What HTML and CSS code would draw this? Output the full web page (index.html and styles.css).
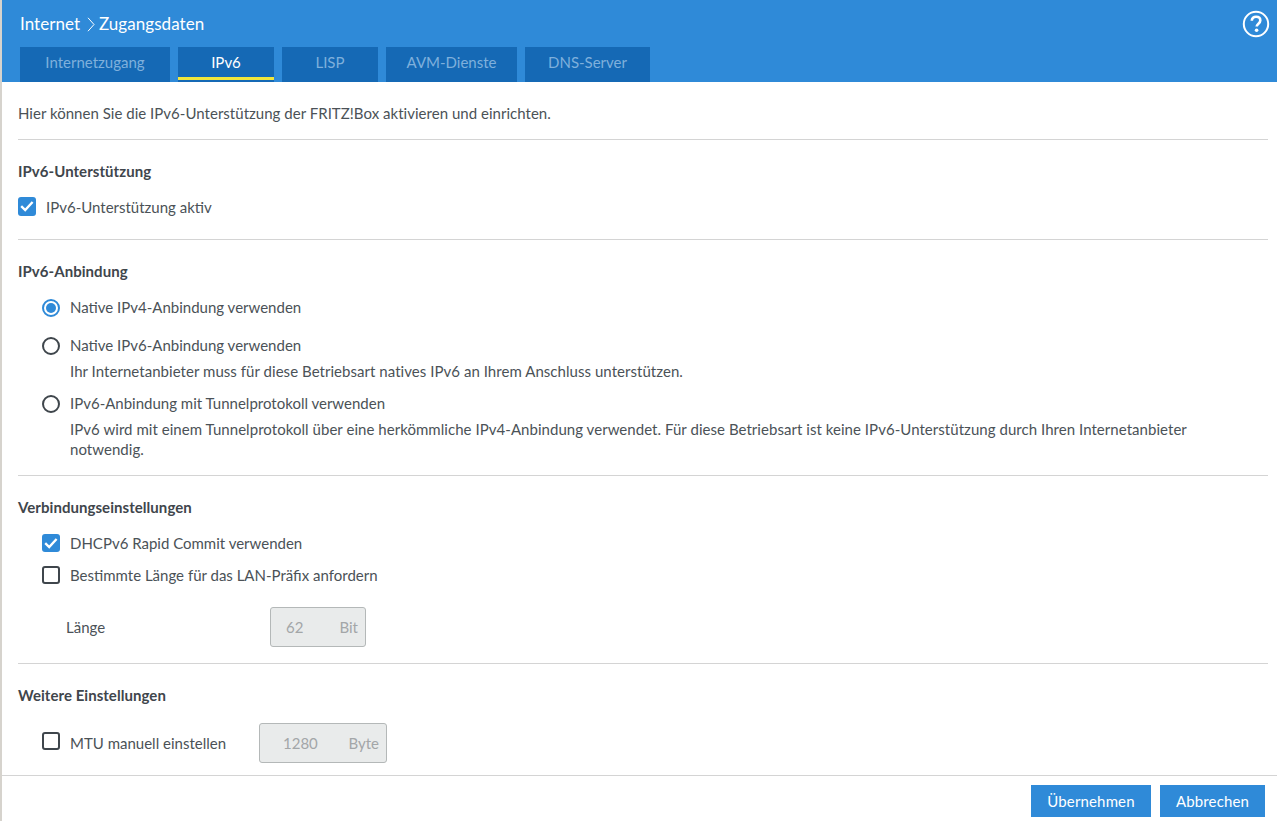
FILE: index.html
```html
<!DOCTYPE html>
<html lang="de">
<head>
<meta charset="utf-8">
<title>Internet &gt; Zugangsdaten</title>
<link rel="stylesheet" href="styles.css">
</head>
<body>
<header class="header">
  <div class="title-row">
    <h1 class="title">Internet
      <svg class="crumb" width="8" height="15" viewBox="0 0 8 15"><path d="M1 .8 7 7.5 1 14.2" fill="none" stroke="#fff" stroke-width="1"/></svg>
      Zugangsdaten</h1>
    <svg class="help" width="28" height="28" viewBox="0 0 28 28"><circle cx="14" cy="14" r="12.2" fill="none" stroke="#fff" stroke-width="2"/><path d="M9.8 10.8c0-2.6 1.9-4.1 4.3-4.1s4.2 1.4 4.2 3.7c0 3.3-3.6 3.2-3.6 6.2" fill="none" stroke="#fff" stroke-width="2.6"/><circle cx="14.6" cy="20.2" r="1.8" fill="#fff"/></svg>
  </div>
  <nav class="tabs">
    <a class="tab tab-a">Internetzugang</a>
    <a class="tab tab-b active">IPv6</a>
    <a class="tab tab-b">LISP</a>
    <a class="tab tab-c">AVM-Dienste</a>
    <a class="tab tab-d">DNS-Server</a>
  </nav>
</header>
<main class="main">
  <p class="intro">Hier können Sie die IPv6-Unterstützung der FRITZ!Box aktivieren und einrichten.</p>

  <section class="sec sec-1">
    <h2 class="head">IPv6-Unterstützung</h2>
    <div class="row row-first">
      <span class="box checked box-top"><svg width="18" height="18" viewBox="0 0 18 18"><path d="M3.2 9.2 7.2 13 14.6 5" fill="none" stroke="#fff" stroke-width="2.4"/></svg></span>
      <span class="lab">IPv6-Unterstützung aktiv</span>
    </div>
  </section>

  <section class="sec sec-2">
    <h2 class="head">IPv6-Anbindung</h2>
    <div class="row row-first indent"><span class="radio on"></span><span class="lab">Native IPv4-Anbindung verwenden</span></div>
    <div class="row indent gap18"><span class="radio"></span><span class="lab">Native IPv6-Anbindung verwenden</span></div>
    <p class="desc">Ihr Internetanbieter muss für diese Betriebsart natives IPv6 an Ihrem Anschluss unterstützen.</p>
    <div class="row indent gap13"><span class="radio"></span><span class="lab">IPv6-Anbindung mit Tunnelprotokoll verwenden</span></div>
    <p class="desc">IPv6 wird mit einem Tunnelprotokoll über eine herkömmliche IPv4-Anbindung verwendet. Für diese Betriebsart ist keine IPv6-Unterstützung durch Ihren Internetanbieter notwendig.</p>
  </section>

  <section class="sec sec-3">
    <h2 class="head">Verbindungseinstellungen</h2>
    <div class="row row-first indent">
      <span class="box checked"><svg width="18" height="18" viewBox="0 0 18 18"><path d="M3.2 9.2 7.2 13 14.6 5" fill="none" stroke="#fff" stroke-width="2.4"/></svg></span>
      <span class="lab">DHCPv6 Rapid Commit verwenden</span>
    </div>
    <div class="row indent gap12"><span class="box"></span><span class="lab">Bestimmte Länge für das LAN-Präfix anfordern</span></div>
    <div class="len-row">
      <span class="len-label">Länge</span>
      <div class="field field-len"><span>62</span><span>Bit</span></div>
    </div>
  </section>

  <section class="sec sec-4">
    <h2 class="head">Weitere Einstellungen</h2>
    <div class="mtu-row">
      <span class="box box-mtu"></span><span class="mtu-lab">MTU manuell einstellen</span>
      <div class="field field-mtu"><span>1280</span><span>Byte</span></div>
    </div>
  </section>
</main>
<footer class="footer">
  <button class="btn btn-ok">Übernehmen</button>
  <button class="btn btn-cancel">Abbrechen</button>
</footer>
</body>
</html>
```
FILE: styles.css
```css
* { box-sizing: border-box; }
html, body { margin: 0; height: 821px; overflow: hidden; }
body {
  display: flex;
  flex-direction: column;
  background: #fff;
  color: #4b5257;
  font: 15px/20px Lato, "Liberation Sans", sans-serif;
  border-left: 2px solid #d6d3cd;
}
.header {
  height: 82px;
  background: #2f8ad8;
  margin-left: -2px;
  position: relative;
  flex: none;
}
.header::before {
  content: "";
  position: absolute;
  left: 0; top: 0;
  width: 2px; height: 47px;
  background: #1569b5;
}
.title-row {
  height: 47px;
  display: flex;
  justify-content: space-between;
  padding: 10px 7px 0 20px;
}
.title {
  margin: 0;
  font-size: 17px;
  font-weight: 400;
  line-height: 28px;
  letter-spacing: .05px;
  color: #fff;
}
.crumb { vertical-align: -2px; margin: 0 0 0 2px; }
.tabs { display: flex; gap: 8px; padding-left: 20px; height: 35px; }
.tab {
  background: #1569b5;
  color: #7fb0dc;
  text-align: center;
  line-height: 31px;
  height: 35px;
}
.tab-a { width: 150px; }
.tab-b { width: 96px; }
.tab-c { width: 131px; }
.tab-d { width: 125px; }
.tab.active { color: #fff; position: relative; }
.tab.active::after {
  content: "";
  position: absolute;
  left: 0; right: 0; top: 30px;
  height: 3px;
  background: #f0e63c;
}
.main { flex: 1; padding: 0 9px 0 16px; min-height: 0; }
.intro { margin: 0; padding: 21px 0 16px; letter-spacing: .025px; }
.sec { border-top: 1px solid #d4d4d4; padding-top: 22px; }
.sec-1 { padding-bottom: 21px; }
.sec-2 { padding-bottom: 15px; }
.sec-3 { padding-bottom: 16px; }
.sec-4 { padding-bottom: 12px; }
.head {
  margin: -1px 0 1px;
  font-size: 15px;
  line-height: 20px;
  font-weight: 700;
  letter-spacing: .05px;
  color: #3f464c;
}
.row { display: flex; align-items: center; gap: 10px; height: 20px; }
.lab { margin-bottom: 2px; }
.row-first { margin-top: 17px; }
.indent { margin-left: 24px; }
.gap18 { margin-top: 18px; }
.gap12 { margin-top: 12px; }
.gap13 { margin-top: 13px; }
.box, .radio { flex: none; width: 18px; height: 18px; border: 2px solid #3f464c; background: #fff; }
.box { border-radius: 3px; margin-bottom: 2px; }
.box-top { margin-bottom: 4px; height: 19px; }
.box-mtu { margin-bottom: 4px; }
.box.checked { border: 0; background: #2f8ad8; }
.box svg { display: block; }
.radio { border-radius: 50%; }
.radio.on { border-color: #2f8ad8; position: relative; }
.radio.on::after {
  content: "";
  position: absolute;
  left: 2px; top: 2px;
  width: 10px; height: 10px;
  border-radius: 50%;
  background: #2f8ad8;
}
.desc { margin: 5px 0 1px 52px; max-width: 1140px; letter-spacing: .045px; }
.len-row { display: flex; align-items: center; margin: 21px 0 0 48px; }
.len-label { width: 204px; }
.field {
  height: 40px;
  display: flex;
  align-items: center;
  justify-content: space-between;
  border: 1px solid #b4b8b8;
  border-radius: 3px;
  background: #e9ebeb;
  color: #a3a6a8;
}
.field-len { width: 96px; padding: 0 7px 0 15px; }
.field-mtu { width: 128px; padding: 0 7px 0 23px; }
.mtu-row { display: flex; align-items: center; margin: 18px 0 0 24px; height: 40px; gap: 10px; }
.mtu-lab { width: 179px; }
.footer {
  flex: none;
  height: 46px;
  display: flex;
  justify-content: flex-end;
  gap: 9px;
  padding: 9px 12px 0 0;
  border-top: 1px solid #d4d4d4;
}
.btn {
  height: 32px;
  border: 0;
  background: #2f8ad8;
  color: #fff;
  font: inherit;
  letter-spacing: .15px;
  padding: 0;
}
.btn-ok { width: 120px; }
.btn-cancel { width: 105px; }
```
